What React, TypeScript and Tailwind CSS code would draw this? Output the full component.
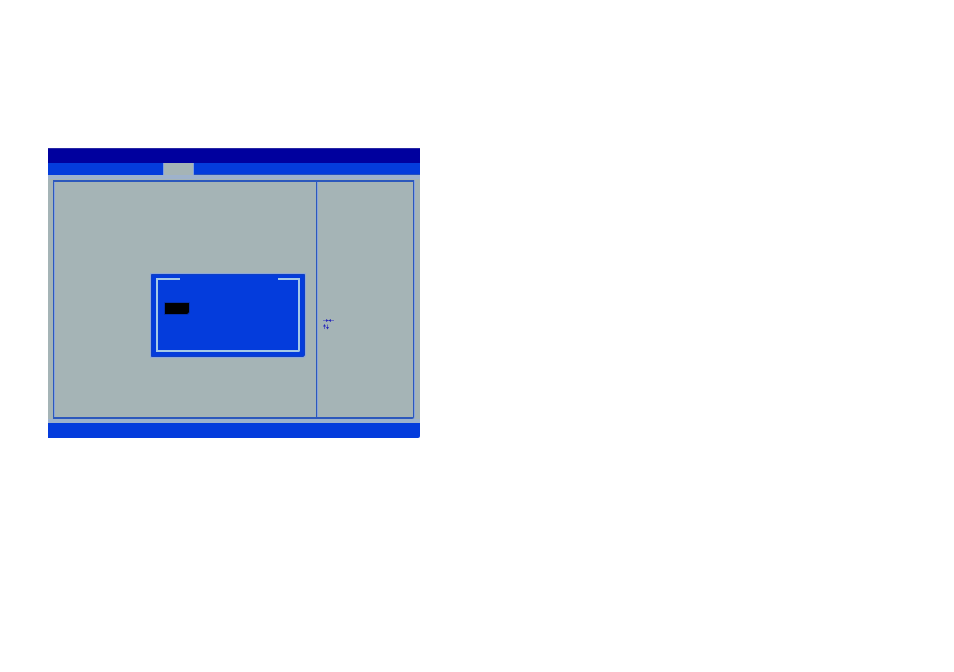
function KeyHints() {
  return (
    <svg
      className="block h-3 w-3"
      viewBox="0 0 12 12"
      role="img"
      aria-label="Arrow keys: select screen, select item"
      fill="none"
      stroke="#3f45c0"
    >
      <path d="M0 2.5H11" strokeWidth="1" opacity="0.6" />
      <path d="M3 1L5.5 2.5L3 4ZM8 1L5.5 2.5L8 4Z" fill="#2929b8" stroke="none" />
      <path d="M1.5 7V11M4.5 6.5V11" strokeWidth="1" opacity="0.75" />
      <path d="M0 8.5L1.5 6L3 8.5ZM3 9L4.5 11.5L6 9Z" fill="#2929b8" stroke="none" />
    </svg>
  );
}

function OptionsDialog() {
  return (
    <section
      role="dialog"
      aria-label="Options"
      className="absolute left-[103px] top-[98px] h-[83px] w-[154px] rounded-br-[2px] border border-[#0f3fc4] bg-[#043cdc] px-1 pt-[3px] pb-1 outline-1 outline-[#8fa8d8]"
    >
      <div className="flex h-[74px] flex-col">
        <div className="flex h-1 shrink-0 justify-between">
          <span className="h-full w-6 border-t-2 border-l-2 border-[#a4c8e8]" />
          <span className="h-full w-[22px] border-t-2 border-r-2 border-[#a4c8e8]" />
        </div>
        <div className="flex-1 rounded-br-[2px] border-x-2 border-b-2 border-[#a4c8e8] px-[7px] pt-[21px]">
          <button
            type="button"
            aria-label="Selected option"
            className="block h-[11px] w-6 rounded-br-[2px] bg-black outline-1 outline-[#0632b0]"
          />
        </div>
      </div>
    </section>
  );
}

export default function App() {
  return (
    <div className="min-h-screen bg-white pt-37 pr-4 pl-12">
      <main className="w-full max-w-[372px]">
        <header className="h-[15px] border-t border-[#2828a4] bg-[#00009e]" />
        <nav className="flex h-3 bg-[#043cdc] pl-[115px]" aria-label="Setup sections">
          <button
            type="button"
            aria-label="Current section"
            className="w-[31px] border-x border-[#7e9ee0] bg-[#a5b4b6]"
          />
          <span className="flex-1 border-b border-[#2450c0]" />
        </nav>
        <div className="relative h-[248px] border-y-4 border-[#9eb2cc] bg-[#a5b4b6] pt-px pr-[6px] pl-[5px]">
          <div className="flex h-[239px] rounded-br-[2px] border-x border-y-2 border-[#2c58bc] shadow-[inset_1px_0_#86a2dc,1px_0_#86a2dc]">
            <div className="flex-1" />
            <aside className="w-[97px] border-l border-[#2c58bc] pt-[136px] pl-[6px] shadow-[inset_1px_0_#86a2dc]">
              <KeyHints />
            </aside>
          </div>
          <div className="absolute inset-x-0 -top-[3px]">
            <OptionsDialog />
          </div>
        </div>
        <footer className="h-[15px] rounded-br-[2px] bg-[#043cdc]" />
      </main>
    </div>
  );
}
